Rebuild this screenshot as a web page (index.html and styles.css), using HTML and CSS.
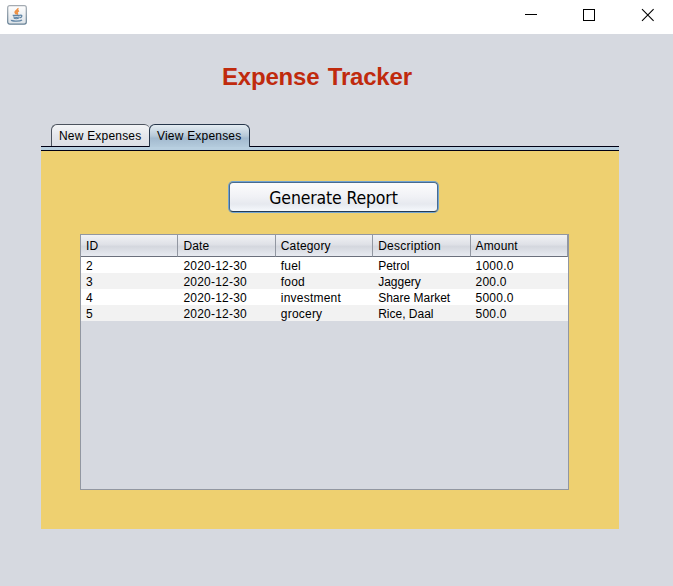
FILE: index.html
```
<!DOCTYPE html>
<html lang="en">
<head>
<meta charset="utf-8">
<title>Expense Tracker</title>
<link rel="stylesheet" href="styles.css">
</head>
<body>
<header class="titlebar">
  <svg class="app-icon" width="20" height="20" viewBox="0 0 20 20" fill="none">
    <defs>
      <linearGradient id="face" x1="0" y1="0" x2="0" y2="1"><stop offset="0" stop-color="#fff"/><stop offset="1" stop-color="#dce2e7"/></linearGradient>
      <linearGradient id="edge" x1="0" y1="0" x2="0" y2="1"><stop offset="0" stop-color="#a4abb2"/><stop offset="1" stop-color="#647f94"/></linearGradient>
    </defs>
    <rect x=".7" y=".7" width="18.6" height="18.4" rx="2" fill="url(#face)" stroke="url(#edge)" stroke-width="1.2"/>
    <path d="M10.800 3.200c.8 1.600-2.600 2.600-2.600 4.100 0 1 1.200 1.400 1.200 2.300M12 5.800c-1.800.6-2.500 1.500-1.700 2.400.4.600.1 1-.3 1.400" stroke="#ee9144" stroke-width="1.700"/>
    <path d="M5.700 10.400h7.200M6.200 11.800c2 .7 4.600.6 6.300 0M6.800 13.300c1.700.6 3.500.5 5 0M13 10.300c2.800-.6 2.300 2.100-.4 2.600" stroke="#5f84a5" stroke-width="1.200"/>
    <path d="M4.500 14.900c-.8 1.400 8.300 1.700 10.500.1" stroke="#5f84a5" stroke-width="1.400"/>
  </svg>
  <svg class="controls" width="131" height="14" viewBox="0 0 131 14" fill="none" stroke="#000">
    <path d="M1 6.500h12" shape-rendering="crispEdges"/>
    <rect x="59.500" y="1.500" width="11" height="11" shape-rendering="crispEdges"/>
    <path d="M118 1.200l11.600 11.600M129.600 1.200L118 12.800" stroke-width="1.100"/>
  </svg>
</header>
<main class="content">
  <h1 class="heading">Expense Tracker</h1>
  <nav class="tabs">
    <span class="tab tab-new">New Expenses</span>
    <span class="tab tab-view">View Expenses</span>
  </nav>
  <section class="panel">
    <button class="report">Generate Report</button>
    <div class="scroll">
      <table class="grid">
        <thead><tr><th>ID</th><th>Date</th><th>Category</th><th class="wide">Description</th><th>Amount</th></tr></thead>
        <tbody>
          <tr><td>2</td><td>2020-12-30</td><td>fuel</td><td>Petrol</td><td>1000.0</td></tr>
          <tr><td>3</td><td>2020-12-30</td><td>food</td><td>Jaggery</td><td>200.0</td></tr>
          <tr><td>4</td><td>2020-12-30</td><td>investment</td><td>Share Market</td><td>5000.0</td></tr>
          <tr><td>5</td><td>2020-12-30</td><td>grocery</td><td>Rice, Daal</td><td>500.0</td></tr>
        </tbody>
      </table>
    </div>
  </section>
</main>
</body>
</html>
```
FILE: styles.css
```
* { box-sizing: border-box; }
body {
  margin: 0;
  height: 586px;
  overflow: hidden;
  background: #d6d9e0;
  color: #000;
  font: 12px/16px "Liberation Sans", Arial, sans-serif;
}
.titlebar {
  display: flex;
  justify-content: space-between;
  height: 34px;
  padding: 5px 18px 0 7px;
  background: #fff;
}
.controls { margin-top: 3px; }
.content { padding: 0 54px 0 41px; }
.heading {
  margin: 0;
  padding: 28px 0 0 181px;
  height: 90px;
  color: #c02a0d;
  font-size: 24px;
  line-height: 30px;
  letter-spacing: -0.2px;
  word-spacing: 2px;
  white-space: nowrap;
}
.tabs {
  display: flex;
  height: 23px;
  padding-left: 10px;
  border-bottom: 1px solid #000014;
}
.tab {
  height: 22px;
  padding: 3px 0 0 7px;
  border: 1px solid #4c535e;
  border-bottom: 0;
  border-radius: 6px 6px 0 0;
  letter-spacing: 0.2px;
  white-space: nowrap;
}
.tab-new {
  width: 99px;
  border-right: 0;
  background: linear-gradient(#f4f5f7, #e4e6eb 50%, #dcdfe6);
}
.tab-view {
  width: 101px;
  height: 23px;
  margin-left: -1px;
  border-color: #26364a;
  background: linear-gradient(#e4ecf2, #b7c9d8 50%, #a3bacf 60%, #b4cbdc);
}
.panel {
  height: 382px;
  padding: 32px 39px 0;
  border-top: 3px solid #b8cfe0;
  background: linear-gradient(#000014 1px, #eed070 1px);
}
.report {
  display: block;
  width: 209px;
  height: 30px;
  margin: 0 0 0 149px;
  padding: 0;
  border: 1px solid #486b91;
  border-bottom-color: #243b56;
  border-radius: 4px;
  box-shadow: 0 0 0 1px #73a4d1;
  background: linear-gradient(#fcfcfd, #f0f1f5 50%, #e6e9ef 75%, #f5f8fc);
  color: #000;
  font: 17.5px/30px "DejaVu Sans Condensed", "DejaVu Sans", sans-serif;
  font-stretch: condensed;
  letter-spacing: -0.15px;
}
.scroll {
  width: 489px;
  height: 256px;
  margin-top: 22px;
  border: 1px solid #9297a1;
  background: #d6d9e0;
}
.grid {
  width: 487px;
  table-layout: fixed;
  border-collapse: separate;
  border-spacing: 0;
}
.grid th {
  height: 22px;
  padding: 0 0 0 5px;
  border-right: 1px solid #9297a1;
  border-bottom: 1px solid #6b707c;
  background: linear-gradient(#f1f2f5, #dfe1e7 45%, #d4d7de 55%, #e8ebf1);
  font-weight: 400;
  letter-spacing: 0.15px;
  text-align: left;
}
.grid th.wide { letter-spacing: 0.25px; }
.grid td {
  height: 16px;
  padding: 2px 0 0 5px;
  background: #fff;
  line-height: 14px;
}
.grid td:nth-child(2),
.grid td:nth-child(3),
.grid td:nth-child(5) { letter-spacing: 0.22px; }
.grid tr:nth-child(even) td { background: #f2f2f2; }
```
